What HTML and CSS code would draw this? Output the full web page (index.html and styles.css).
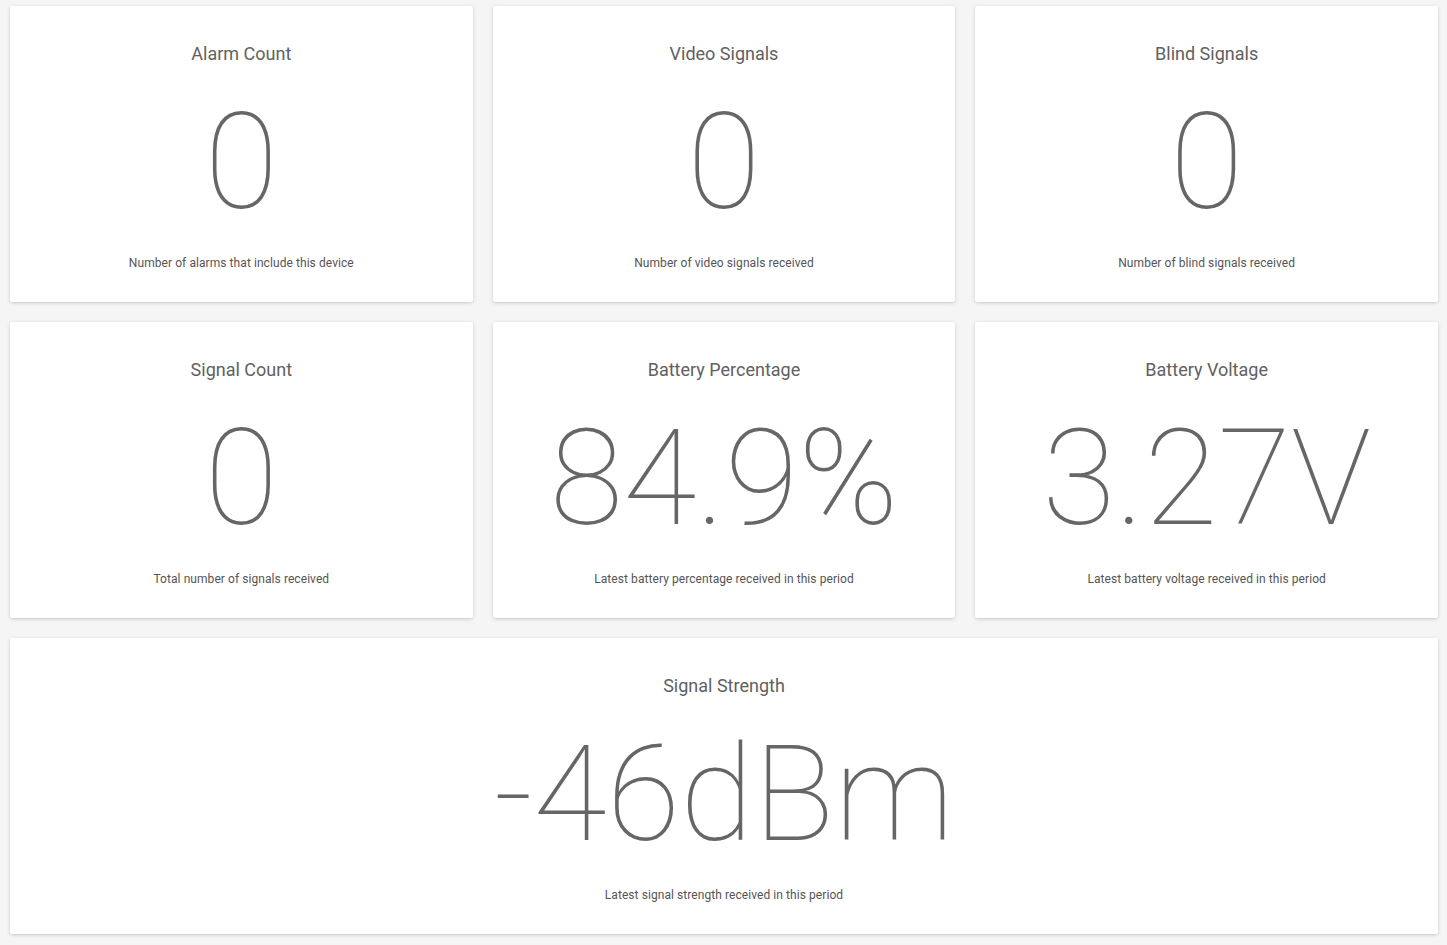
FILE: index.html
```html
<!DOCTYPE html>
<html>
<head>
<meta charset="utf-8">
<link rel="stylesheet" href="styles.css">
</head>
<body>
<div class="grid">
  <div class="card">
    <div class="title">Alarm Count</div>
    <div class="value">0</div>
    <div class="desc">Number of alarms that include this device</div>
  </div>
  <div class="card">
    <div class="title">Video Signals</div>
    <div class="value">0</div>
    <div class="desc">Number of video signals received</div>
  </div>
  <div class="card">
    <div class="title">Blind Signals</div>
    <div class="value">0</div>
    <div class="desc">Number of blind signals received</div>
  </div>
  <div class="card">
    <div class="title">Signal Count</div>
    <div class="value">0</div>
    <div class="desc">Total number of signals received</div>
  </div>
  <div class="card">
    <div class="title">Battery Percentage</div>
    <div class="value">84.9%</div>
    <div class="desc">Latest battery percentage received in this period</div>
  </div>
  <div class="card">
    <div class="title">Battery Voltage</div>
    <div class="value">3.27V</div>
    <div class="desc">Latest battery voltage received in this period</div>
  </div>
  <div class="card wide">
    <div class="title">Signal Strength</div>
    <div class="value">-46dBm</div>
    <div class="desc">Latest signal strength received in this period</div>
  </div>
</div>
</body>
</html>
```

FILE: styles.css
```css
html, body {
  margin: 0;
  padding: 0;
  background: #f5f5f5;
  font-family: Roboto, "Liberation Sans", sans-serif;
}
.grid {
  display: grid;
  grid-template-columns: repeat(3, 1fr);
  gap: 20px;
  padding: 6px 9px 11px 10px;
}
.card {
  background: #fff;
  border-radius: 2px;
  box-shadow: 0 1px 4px rgba(0,0,0,0.14), 0 1px 2px rgba(0,0,0,0.06);
  height: 296px;
  box-sizing: border-box;
  display: flex;
  flex-direction: column;
  align-items: center;
  padding-top: 37px;
  color: #666;
}
.wide {
  grid-column: 1 / span 3;
}
.title {
  font-size: 18px;
  line-height: 22px;
  color: #616161;
}
.value {
  font-weight: 100;
  font-size: 134px;
  line-height: 140px;
  margin-top: 28px;
  color: #666;
}
.desc {
  font-size: 12px;
  line-height: 16px;
  letter-spacing: 0.07px;
  margin-top: 22px;
  color: #555;
}
```
